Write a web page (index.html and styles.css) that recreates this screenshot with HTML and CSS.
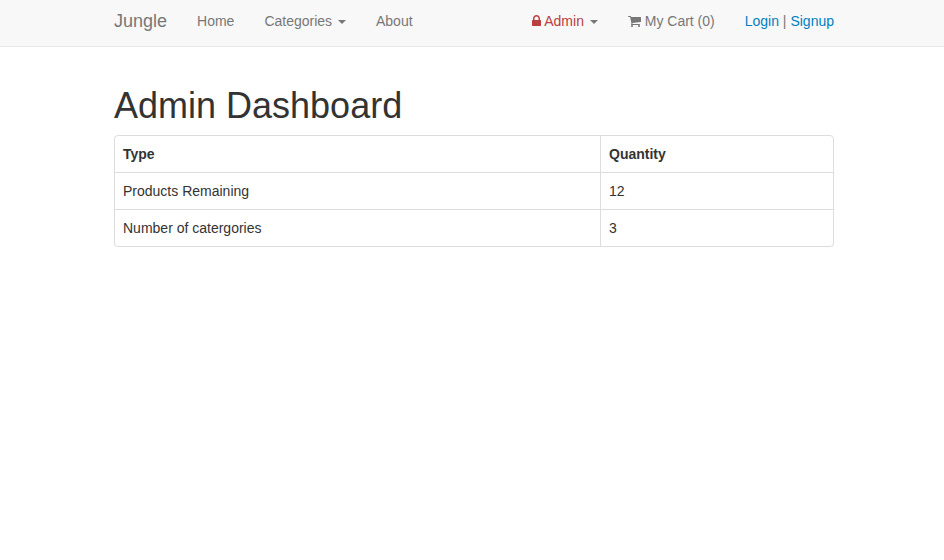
FILE: index.html
```html
<!DOCTYPE html>
<html lang="en">
<head>
<meta charset="utf-8">
<title>Jungle</title>
<link rel="stylesheet" href="styles.css">
</head>
<body>
<nav class="navbar">
  <div class="container bar">
    <a class="brand">Jungle</a>
    <ul class="nav">
      <li><a>Home</a></li>
      <li><a>Categories <span class="caret"></span></a></li>
      <li><a>About</a></li>
    </ul>
    <ul class="nav right">
      <li><a class="admin"><svg class="icon lock" viewBox="0 0 1152 1792"><path d="M320 768h512V576q0-106-75-181t-181-75-181 75-75 181v192zm832 96v576q0 40-28 68t-68 28H96q-40 0-68-28t-28-68V864q0-40 28-68t68-28h32V576q0-184 132-316t316-132 316 132 132 316v192h32q40 0 68 28t28 68z"/></svg> Admin <span class="caret"></span></a></li>
      <li><a><svg class="icon cart" viewBox="0 0 1664 1792"><path d="M640 1536q0 52-38 90t-90 38-90-38-38-90 38-90 90-38 90 38 38 90zm896 0q0 52-38 90t-90 38-90-38-38-90 38-90 90-38 90 38 38 90zm128-1088v512q0 24-16.500 42.500T1607 1024L563 1146q13 60 13 70 0 16-24 64h920q26 0 45 19t19 45-19 45-45 19H448q-26 0-45-19t-19-45q0-11 8-31.500t16-36 21.500-40T445 1207L268 384H64q-26 0-45-19T0 320t19-45 45-19h256q16 0 28.500 6.500T368 278t13 24.500 8 26 5.500 29.500 4.500 26h1201q26 0 45 19t19 45z"/></svg> My Cart (0)</a></li>
      <li class="auth"><a>Login</a> | <a>Signup</a></li>
    </ul>
  </div>
</nav>
<main class="container">
  <h1>Admin Dashboard</h1>
  <div class="panel">
    <table>
      <thead><tr><th class="type">Type</th><th>Quantity</th></tr></thead>
      <tbody>
        <tr><td>Products Remaining</td><td>12</td></tr>
        <tr><td>Number of catergories</td><td>3</td></tr>
      </tbody>
    </table>
  </div>
</main>
</body>
</html>
```
FILE: styles.css
```css
* { box-sizing: border-box; }
body {
  margin: 0;
  font: 14px/20px "Liberation Sans", Arial, sans-serif;
  color: #333;
  background: #fff;
}
.container { width: 720px; margin: 0 auto 0 114px; }
.navbar {
  height: 47px;
  background: #f8f8f8;
  border-bottom: 1px solid #e7e7e7;
}
.bar { display: flex; padding-top: 11px; color: #777; white-space: nowrap; }
.brand { font-size: 18px; margin-right: 15px; }
.nav { display: flex; list-style: none; margin: 0; padding: 0; }
.nav > li { padding: 0 15px; }
.right { margin-left: auto; }
.right > li:last-child { padding-right: 0; }
.admin { color: #b94040; }
.auth a { color: #0280be; }
.caret {
  display: inline-block;
  margin-left: 2px;
  vertical-align: middle;
  border-top: 4px solid #777;
  border-right: 4px solid transparent;
  border-left: 4px solid transparent;
}
.icon { height: 14px; fill: currentColor; vertical-align: -2px; }
.lock { width: 9px; }
.cart { width: 13px; }
h1 { font-size: 36px; line-height: 40px; font-weight: 500; margin: 39px 0 9px; }
.panel {
  border: 1px solid #ddd;
  border-radius: 4px;
  box-shadow: 0 1px 1px rgba(0, 0, 0, .05);
}
table { width: 100%; border-collapse: separate; border-spacing: 0; table-layout: fixed; }
th, td { padding: 8px; text-align: left; border-left: 1px solid #ddd; border-top: 1px solid #ddd; }
thead th { border-top: 0; }
th:first-child, td:first-child { border-left: 0; }
.type { width: 485px; }
```
